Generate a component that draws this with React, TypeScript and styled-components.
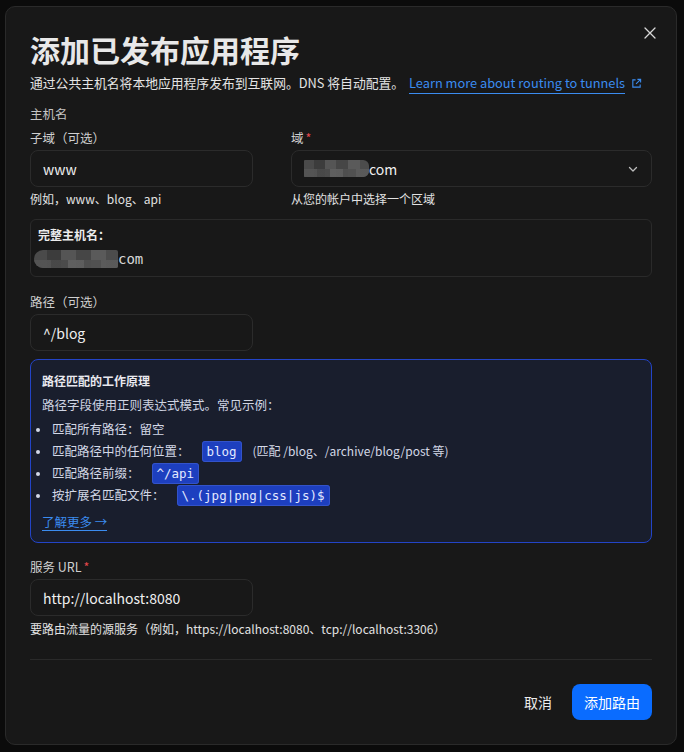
import React from "react";
import styled, { createGlobalStyle } from "styled-components";

const Global = createGlobalStyle`
  html, body { margin: 0; padding: 0; background: #0b0b0b; }
  body { font-family: "Noto Sans CJK SC", "Noto Sans", sans-serif; color: #e6e6e6; }
  * { box-sizing: border-box; }
`;

const Backdrop = styled.div`
  width: 684px;
  height: 752px;
  padding: 6px 7px 7px 5px;
  background: #0b0b0b;
`;

const Modal = styled.div`
  position: relative;
  height: 739px;
  background: #181818;
  border: 1px solid #2a2a2a;
  border-radius: 10px;
  padding: 22px 24px 24px 24px;
  display: flex;
  flex-direction: column;
`;

const Close = styled.button`
  position: absolute;
  top: 16px;
  right: 16px;
  width: 20px;
  height: 20px;
  padding: 0;
  border: none;
  background: transparent;
  color: #d8d8d8;
  display: flex;
  align-items: center;
  justify-content: center;
`;

const Title = styled.h1`
  margin: 0;
  font-size: 30px;
  line-height: 40px;
  font-weight: 700;
  color: #e8e8e8;
`;

const Subtitle = styled.p`
  margin: 4px 0 0;
  font-size: 12.8px;
  line-height: 20px;
  color: #e4e4e4;
  white-space: nowrap;
`;

const Link = styled.a`
  color: #3b8cf0;
  text-decoration: none;
  border-bottom: 1px solid #3b8cf0;
  margin-left: 5px;
  padding-bottom: 1px;
`;

const ExtIcon = styled.svg`
  margin-left: 6px;
  vertical-align: -1px;
`;

const Section = styled.div`
  margin-top: 12px;
  font-size: 12.5px;
  line-height: 18px;
  color: #c4c4c4;
`;

const Row = styled.div`
  display: grid;
  grid-template-columns: 223px 1fr;
  column-gap: 38px;
  margin-top: 6px;
`;

const Field = styled.div`
  display: flex;
  flex-direction: column;
`;

const Label = styled.label`
  font-size: 12.5px;
  line-height: 18px;
  color: #cfcfcf;
  margin-bottom: 3px;
`;

const Req = styled.span`
  color: #e5484d;
  margin-left: 2px;
`;

const Input = styled.div<{ $w?: number }>`
  height: 37px;
  width: ${(p) => (p.$w ? `${p.$w}px` : "auto")};
  border: 1px solid #2b2b2b;
  border-radius: 8px;
  background: #181818;
  display: flex;
  align-items: center;
  padding: 0 12px;
  font-size: 14px;
  color: #f0f0f0;
`;

const SelectBox = styled(Input)`
  justify-content: space-between;
`;

const Help = styled.div`
  margin-top: 3px;
  font-size: 12px;
  line-height: 18px;
  color: #e2e2e2;
`;

const Pixel = styled.span<{ $w: number; $h: number; $round?: boolean }>`
  display: inline-block;
  width: ${(p) => p.$w}px;
  height: ${(p) => p.$h}px;
  border-radius: ${(p) => (p.$round ? "9px 2px 2px 9px" : "1px 6px 6px 1px")};
  background:
    linear-gradient(90deg, #4a4a4a 0 16%, #3c3c3c 16% 32%, #555 32% 50%, #464646 50% 68%, #5a5a5a 68% 86%, #4c4c4c 86% 100%);
  vertical-align: middle;
  position: relative;
  overflow: hidden;
  &::after {
    content: "";
    position: absolute;
    left: 0; right: 0; bottom: 0; height: 45%;
    background: linear-gradient(90deg, #555 0 20%, #4a4a4a 20% 40%, #606060 40% 60%, #505050 60% 80%, #5b5b5b 80% 100%);
    opacity: 0.9;
  }
`;

const DomainValue = styled.span`
  display: flex;
  align-items: center;
`;

const HostBox = styled.div`
  margin-top: 11px;
  border: 1px solid #2a2a2a;
  border-radius: 6px;
  padding: 6px 7px 8px;
  height: 62px;
`;

const HostLabel = styled.div`
  font-size: 12px;
  line-height: 18px;
  font-weight: 600;
  color: #ececec;
`;

const HostValue = styled.div`
  margin-top: 6px;
  font-family: "DejaVu Sans Mono", "Liberation Mono", monospace;
  font-size: 14px;
  color: #d8d8d8;
  display: flex;
  align-items: center;
  margin-left: -4px;
`;

const PathField = styled(Field)`
  margin-top: 16px;
`;

const Info = styled.div`
  margin-top: 8px;
  background: #191e2d;
  border: 1px solid #2344c7;
  border-radius: 8px;
  padding: 12px 11px 10px;
  height: 184px;
`;

const InfoTitle = styled.div`
  font-size: 12px;
  line-height: 18px;
  font-weight: 700;
  color: #e8e8ee;
`;

const InfoText = styled.div`
  margin-top: 6px;
  font-size: 12.5px;
  line-height: 18px;
  color: #cfd4e2;
`;

const List = styled.ul`
  margin: 4px 0 0;
  padding: 0;
  list-style: none;
  font-size: 12.5px;
  color: #d3d8e6;
  li {
    line-height: 22px;
    height: 22px;
    white-space: nowrap;
  }
  li::before {
    content: "";
    display: inline-block;
    width: 4px;
    height: 4px;
    border-radius: 50%;
    background: #d3d8e6;
    vertical-align: middle;
    margin: 0 12px 2px -6px;
  }
`;

const Code = styled.code`
  font-family: "DejaVu Sans Mono", "Liberation Mono", monospace;
  font-size: 12.5px;
  background: #1d3fbf;
  color: #e3e9ff;
  border: 1px solid #3353c9;
  border-radius: 3px;
  padding: 2px 4px;
  margin: 0 8px 0 12px;
`;

const Note = styled.span`
  font-size: 12px;
`;

const More = styled.a`
  display: inline-block;
  margin-top: 8px;
  font-size: 12.5px;
  line-height: 16px;
  color: #3b8cf0;
  text-decoration: none;
  border-bottom: 1px solid #3b8cf0;
`;

const UrlField = styled(Field)`
  margin-top: 15px;
`;

const UrlHelp = styled(Help)`
  margin-top: 4px;
`;

const Divider = styled.hr`
  margin: 21px 0 0;
  border: none;
  border-top: 1px solid #2a2a2a;
`;

const Footer = styled.div`
  display: flex;
  justify-content: flex-end;
  align-items: center;
  gap: 20px;
  margin-top: 24px;
`;

const Ghost = styled.button`
  background: transparent;
  border: none;
  color: #ececec;
  font-family: inherit;
  font-size: 14px;
  padding: 0;
`;

const Primary = styled.button`
  height: 36px;
  padding: 0 12px;
  background: #0a6cff;
  border: none;
  border-radius: 8px;
  color: #fff;
  font-family: inherit;
  font-size: 14px;
`;

export default function App() {
  return (
    <>
      <Global />
      <Backdrop>
        <Modal>
          <Close aria-label="close">
            <svg width="12" height="12" viewBox="0 0 12 12" fill="none" stroke="currentColor" strokeWidth="1.3" strokeLinecap="round">
              <path d="M1 1L11 11M11 1L1 11" />
            </svg>
          </Close>
          <Title>添加已发布应用程序</Title>
          <Subtitle>
            通过公共主机名将本地应用程序发布到互联网。DNS 将自动配置。
            <Link href="#">Learn more about routing to tunnels</Link>
            <ExtIcon width="11" height="11" viewBox="0 0 12 12" fill="none" stroke="#3b8cf0" strokeWidth="1.2">
              <path d="M5 2H2v8h8V7" />
              <path d="M7 1.5h3.5V5M10.5 1.5L5.5 6.5" />
            </ExtIcon>
          </Subtitle>
          <Section>主机名</Section>
          <Row>
            <Field>
              <Label>子域（可选）</Label>
              <Input>www</Input>
              <Help>例如，www、blog、api</Help>
            </Field>
            <Field>
              <Label>
                域<Req>*</Req>
              </Label>
              <SelectBox>
                <DomainValue>
                  <Pixel $w={65} $h={17} />
                  com
                </DomainValue>
                <svg width="12" height="12" viewBox="0 0 12 12" fill="none" stroke="#bdbdbd" strokeWidth="1.3" strokeLinecap="round" strokeLinejoin="round">
                  <path d="M2.5 4.5L6 8l3.5-3.5" />
                </svg>
              </SelectBox>
              <Help>从您的帐户中选择一个区域</Help>
            </Field>
          </Row>
          <HostBox>
            <HostLabel>完整主机名：</HostLabel>
            <HostValue>
              <Pixel $w={84} $h={18} $round />
              com
            </HostValue>
          </HostBox>
          <PathField>
            <Label>路径（可选）</Label>
            <Input $w={223}>^/blog</Input>
          </PathField>
          <Info>
            <InfoTitle>路径匹配的工作原理</InfoTitle>
            <InfoText>路径字段使用正则表达式模式。常见示例：</InfoText>
            <List>
              <li>匹配所有路径：留空</li>
              <li>
                匹配路径中的任何位置：<Code>blog</Code> <Note>(匹配 /blog、/archive/blog/post 等)</Note>
              </li>
              <li>
                匹配路径前缀：<Code>^/api</Code>
              </li>
              <li>
                按扩展名匹配文件：<Code>\.(jpg|png|css|js)$</Code>
              </li>
            </List>
            <More href="#">了解更多 →</More>
          </Info>
          <UrlField>
            <Label>
              服务 URL<Req>*</Req>
            </Label>
            <Input $w={223}>http://localhost:8080</Input>
            <UrlHelp>要路由流量的源服务（例如，https://localhost:8080、tcp://localhost:3306）</UrlHelp>
          </UrlField>
          <Divider />
          <Footer>
            <Ghost>取消</Ghost>
            <Primary>添加路由</Primary>
          </Footer>
        </Modal>
      </Backdrop>
    </>
  );
}
